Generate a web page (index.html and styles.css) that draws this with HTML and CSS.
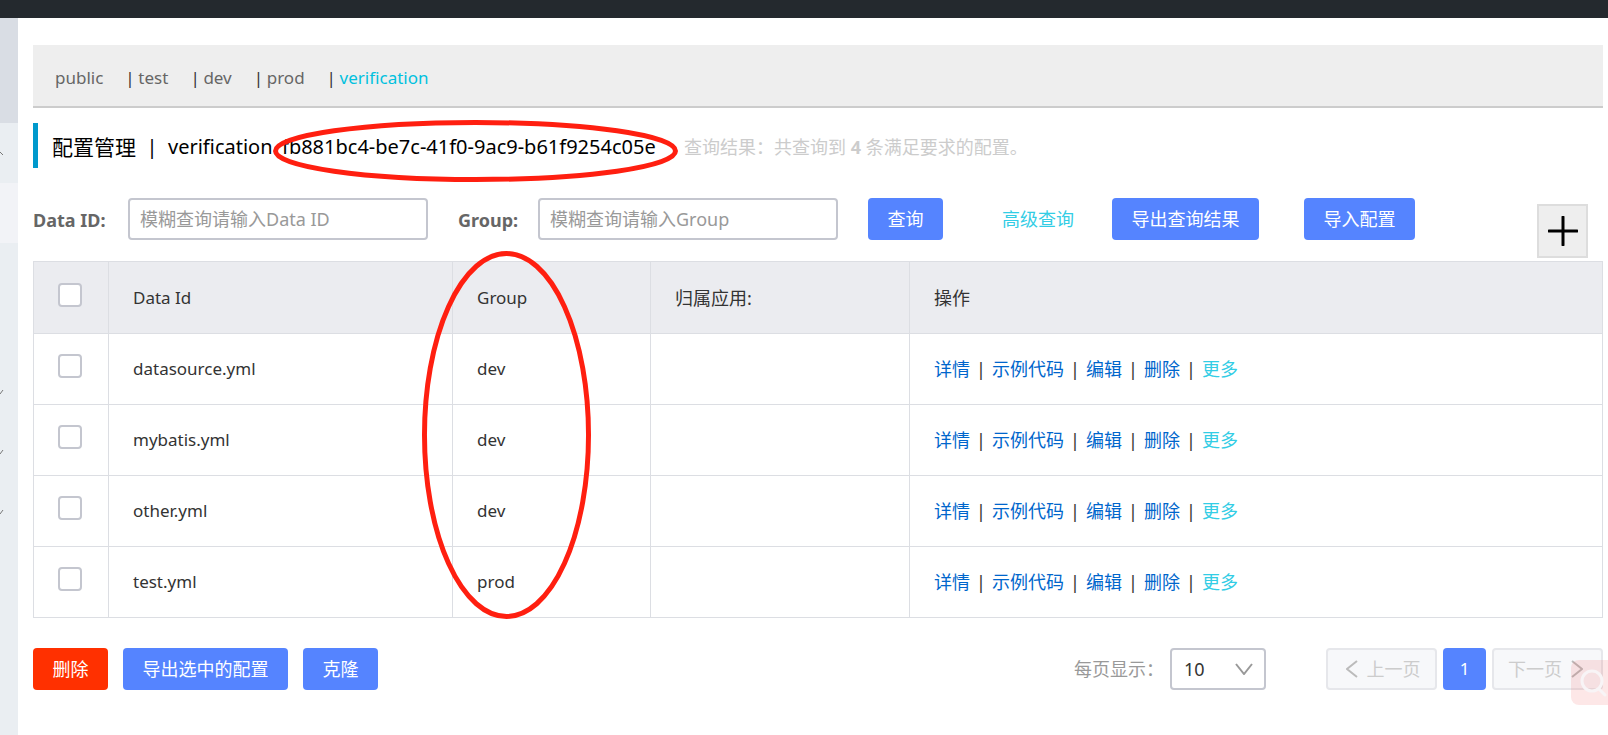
FILE: index.html
```html
<!DOCTYPE html>
<html lang="zh-CN">
<head>
<meta charset="utf-8">
<title>配置管理</title>
<link rel="stylesheet" href="styles.css">
</head>
<body>
<header class="topbar"></header>
<div class="layout">
  <aside class="sidebar">
    <div class="side-head"></div>
    <div class="side-item"><svg class="side-arrow" viewBox="0 0 4 8"><path d="M0 3L3 6"/></svg></div>
    <div class="side-item side-active"></div>
    <div class="side-item"></div>
    <div class="side-item"></div>
    <div class="side-item"><svg class="side-arrow" viewBox="0 0 4 8"><path d="M0 5L3 1"/></svg></div>
    <div class="side-item"><svg class="side-arrow" viewBox="0 0 4 8"><path d="M0 5L3 1"/></svg></div>
    <div class="side-item"><svg class="side-arrow" viewBox="0 0 4 8"><path d="M0 5L3 1"/></svg></div>
  </aside>
  <main class="main">
    <nav class="namespaces">
      <a class="ns" href="#">public</a>
      <span class="ns-bar">|</span><a class="ns" href="#">test</a>
      <span class="ns-bar">|</span><a class="ns" href="#">dev</a>
      <span class="ns-bar">|</span><a class="ns" href="#">prod</a>
      <span class="ns-bar">|</span><a class="ns ns-current" href="#">verification</a>
    </nav>

    <div class="title-row">
      <h1 class="title"><span class="title-cn">配置管理</span><span class="title-bar">|</span><span class="title-ns">verification</span><span class="ns-id">fb881bc4-be7c-41f0-9ac9-b61f9254c05e</span></h1>
      <p class="result">查询结果：共查询到 <strong>4</strong> 条满足要求的配置。</p>
      <svg class="mark mark-id" viewBox="0 0 405 62" preserveAspectRatio="none"><ellipse cx="202.5" cy="31" rx="200" ry="28.5"/></svg>
    </div>

    <form class="search">
      <label class="label label-data" for="dataId">Data ID:</label>
      <input class="field" id="dataId" type="text" placeholder="模糊查询请输入Data ID">
      <label class="label label-group" for="group">Group:</label>
      <input class="field" id="group" type="text" placeholder="模糊查询请输入Group">
      <button class="btn btn-query" type="button">查询</button>
      <a class="advanced" href="#">高级查询</a>
      <button class="btn btn-export" type="button">导出查询结果</button>
      <button class="btn btn-import" type="button">导入配置</button>
      <button class="add" type="button" aria-label="新建配置"><svg class="add-icon" viewBox="0 0 30 30"><path d="M15 1V29M1 15H29"/></svg></button>
    </form>

    <div class="table-wrap">
      <table class="table">
        <colgroup><col class="c-check"><col class="c-data"><col class="c-group"><col class="c-app"><col></colgroup>
        <thead>
          <tr><th><input class="check" type="checkbox" aria-label="全选"></th><th>Data Id</th><th>Group</th><th class="cn">归属应用:</th><th class="cn">操作</th></tr>
        </thead>
        <tbody>
          <tr><td><input class="check" type="checkbox" aria-label="datasource.yml"></td><td>datasource.yml</td><td>dev</td><td></td><td class="ops"><a href="#">详情</a><span class="sep">|</span><a href="#">示例代码</a><span class="sep">|</span><a href="#">编辑</a><span class="sep">|</span><a href="#">删除</a><span class="sep">|</span><a class="more" href="#">更多</a></td></tr>
          <tr><td><input class="check" type="checkbox" aria-label="mybatis.yml"></td><td>mybatis.yml</td><td>dev</td><td></td><td class="ops"><a href="#">详情</a><span class="sep">|</span><a href="#">示例代码</a><span class="sep">|</span><a href="#">编辑</a><span class="sep">|</span><a href="#">删除</a><span class="sep">|</span><a class="more" href="#">更多</a></td></tr>
          <tr><td><input class="check" type="checkbox" aria-label="other.yml"></td><td>other.yml</td><td>dev</td><td></td><td class="ops"><a href="#">详情</a><span class="sep">|</span><a href="#">示例代码</a><span class="sep">|</span><a href="#">编辑</a><span class="sep">|</span><a href="#">删除</a><span class="sep">|</span><a class="more" href="#">更多</a></td></tr>
          <tr><td><input class="check" type="checkbox" aria-label="test.yml"></td><td>test.yml</td><td>prod</td><td></td><td class="ops"><a href="#">详情</a><span class="sep">|</span><a href="#">示例代码</a><span class="sep">|</span><a href="#">编辑</a><span class="sep">|</span><a href="#">删除</a><span class="sep">|</span><a class="more" href="#">更多</a></td></tr>
        </tbody>
      </table>
      <svg class="mark mark-group" viewBox="0 0 170 368" preserveAspectRatio="none"><ellipse cx="85" cy="184" rx="82.5" ry="181.5"/></svg>
    </div>

    <footer class="footer">
      <button class="btn btn-delete" type="button">删除</button>
      <button class="btn btn-export-selected" type="button">导出选中的配置</button>
      <button class="btn btn-clone" type="button">克隆</button>
      <div class="pager">
        <label class="page-label" for="size">每页显示：</label>
        <span class="select-wrap">
          <select class="select" id="size"><option>10</option><option>20</option></select>
          <svg class="select-arrow" viewBox="0 0 18 12"><path d="M1 1L9 11L17 1"/></svg>
        </span>
        <button class="page page-prev" type="button" disabled><svg class="page-arrow" viewBox="0 0 12 18"><path d="M11 1L1 9L11 17"/></svg>上一页</button>
        <button class="page page-current" type="button">1</button>
        <button class="page page-next" type="button" disabled>下一页<svg class="page-arrow" viewBox="0 0 12 18"><path d="M1 1L11 9L1 17"/></svg></button>
      </div>
    </footer>
  </main>
</div>
<button class="finder" type="button" aria-label="搜索"><svg class="finder-icon" viewBox="0 0 28 30"><circle cx="12" cy="12" r="10"/><path d="M19 20L25 26"/></svg></button>
</body>
</html>
```
FILE: styles.css
```css
* { box-sizing: border-box; }
body {
  margin: 0;
  min-height: 100vh;
  display: flex;
  flex-direction: column;
  position: relative;
  overflow: hidden;
  background: #fff;
  color: #333;
  font: 17px/24px "Noto Sans", "Noto Sans CJK SC", sans-serif;
}
a { color: #06c; text-decoration: none; }
button, input, select { font: inherit; margin: 0; }
svg { fill: none; display: block; }

.topbar { height: 18px; background: #24292e; }
.layout { flex: 1; display: flex; }
.sidebar { width: 18px; flex: none; background: #eaeef2; }
.side-head { height: 105px; background: #d9dde4; }
.side-item { height: 60px; display: flex; align-items: center; }
.side-active { background: #f2f3f7; }
.side-arrow { width: 4px; height: 8px; stroke: #777; stroke-width: 1; }

.main { flex: 1; min-width: 0; padding: 27px 5px 40px 15px; }

.namespaces {
  display: flex;
  align-items: center;
  height: 63px;
  padding: 5px 22px 0;
  background: #eee;
  border-bottom: 2px solid #ccc;
}
.ns { color: #666; }
.ns-current { color: #00c1de; }
.ns-bar { width: 35px; padding-left: 22px; color: #333; }

.title-row { position: relative; display: flex; align-items: center; margin-top: 15px; height: 45px; padding: 2px 0 0 14px; border-left: 5px solid #09c; }
.title { display: flex; margin: 0; font-size: 20px; font-weight: 400; line-height: 28px; color: #000; white-space: nowrap; }
.title-cn { font-size: 21px; }
.title-bar { width: 32px; text-align: center; }
.title-ns { width: 114px; }
.ns-id { width: 402px; }
.result { margin: 0; font-size: 18px; color: #ccc; white-space: nowrap; }

.mark { position: absolute; stroke: #ff1f10; stroke-width: 5; pointer-events: none; }
.mark-id { left: 235px; top: -3px; width: 405px; height: 62px; }
.mark-group { left: 389px; top: -10px; width: 169px; height: 368px; }

.search { display: flex; align-items: flex-start; margin: 30px 0 3px; font-size: 18px; }
.label { font-size: 18px; font-weight: 700; line-height: 44px; color: #666; white-space: nowrap; }
.label-data { width: 95px; }
.label-group { width: 80px; margin-left: 30px; }
.field { width: 300px; height: 42px; padding: 0 10px; border: 2px solid #c4c6cf; border-radius: 4px; background: #fff; color: #333; }
.field::placeholder { color: #999; opacity: 1; }

.btn { height: 42px; padding: 0; border: 0; border-radius: 4px; background: #5584ff; color: #fff; font-size: 18px; white-space: nowrap; }
.btn-query { width: 75px; margin-left: 30px; }
.advanced { margin: 0 38px 0 59px; line-height: 42px; color: #33cde5; white-space: nowrap; }
.btn-export { width: 147px; }
.btn-import { width: 111px; margin-left: 45px; }
.add { display: flex; align-items: center; justify-content: center; width: 51px; height: 54px; margin: 6px 15px 0 auto; padding: 0; border: 2px solid #ddd; background: #eee; }
.add-icon { width: 30px; height: 30px; stroke: #000; stroke-width: 3; stroke-linecap: round; }

.table-wrap { position: relative; }
.table { width: 100%; table-layout: fixed; border-collapse: collapse; }
.c-check { width: 75px; }
.c-data { width: 344px; }
.c-group { width: 198px; }
.c-app { width: 259px; }
.table th, .table td { height: 71px; padding: 0 24px; border: 1px solid #dcdee3; text-align: left; font-weight: 400; vertical-align: middle; white-space: nowrap; }
.table th { height: 72px; background: #ebecf0; }
.table .cn, .table .ops { font-size: 18px; }
.check { appearance: none; display: block; width: 24px; height: 24px; margin-bottom: 6px; border: 2px solid #c4c6cf; border-radius: 4px; background: #fff; }
.sep { display: inline-block; width: 22px; text-align: center; }
.more { color: #33cde5; }

.footer { display: flex; gap: 15px; margin-top: 30px; }
.btn-delete, .btn-clone { width: 75px; }
.btn-delete { background: #ff3000; }
.btn-export-selected { width: 165px; }
.pager { display: flex; gap: 6px; margin-left: auto; font-size: 18px; color: #999; }
.page-label { width: 90px; line-height: 42px; white-space: nowrap; }
.select-wrap { position: relative; margin-right: 54px; }
.select { appearance: none; width: 96px; height: 42px; padding: 0 12px; border: 2px solid #c4c6cf; border-radius: 4px; background: #fff; color: #333; }
.select-arrow { position: absolute; right: 13px; top: 15px; width: 18px; height: 12px; stroke: #999; stroke-width: 2; pointer-events: none; }
.page { display: flex; align-items: center; justify-content: center; gap: 9px; height: 42px; padding: 0; border: 2px solid #e6e7eb; border-radius: 4px; background: #f7f8fa; color: #ccc; white-space: nowrap; }
.page-prev { width: 111px; padding-left: 3px; }
.page-next { width: 111px; padding-right: 4px; }
.page-current { width: 43px; border: 0; background: #5584ff; color: #fff; font-size: 17px; }
.page-arrow { width: 12px; height: 18px; stroke: #bbb; stroke-width: 2; }

.finder { position: absolute; right: -8px; top: 660px; width: 45px; height: 45px; padding: 9px; border: 0; border-radius: 8px; background: rgba(240, 60, 60, 0.12); }
.finder-icon { width: 28px; height: 30px; stroke: #f8f4f6; stroke-width: 3; stroke-linecap: round; }
```
